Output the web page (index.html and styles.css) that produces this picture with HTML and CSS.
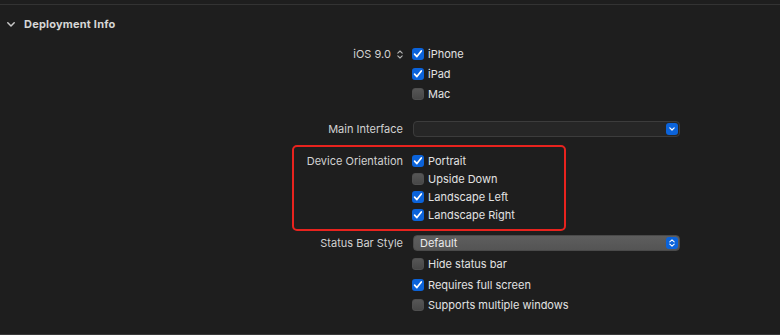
FILE: index.html
```html
<!DOCTYPE html>
<html lang="en">
<head>
  <meta charset="UTF-8">
  <title>Deployment Info</title>
  <link rel="stylesheet" href="styles.css">
</head>
<body>

<!-- 상단 구분선 -->
<div class="rule"></div>

<!-- 섹션 헤더 -->
<div class="section-head">
  <svg class="chevron" width="8" height="5" viewBox="0 0 8 5"><path d="M0.8 0.8 L4 4 L7.2 0.8" fill="none" stroke="#c8c8c8" stroke-width="1.5" stroke-linecap="round" stroke-linejoin="round"/></svg>
  <span class="section-title">Deployment Info</span>
</div>

<div class="form">

  <!-- 대상 OS / 기기 -->
  <div class="field rows-20">
    <div class="label">iOS 9.0
      <svg class="stepper" width="6" height="9" viewBox="0 0 6 9"><path d="M0.8 3.2 L3 1 L5.2 3.2 M0.8 5.8 L3 8 L5.2 5.8" fill="none" stroke="#b4b4b4" stroke-width="1.1" stroke-linecap="round" stroke-linejoin="round"/></svg>
    </div>
    <div class="controls">
      <div class="check on"><span class="box"></span>iPhone</div>
      <div class="check on"><span class="box"></span>iPad</div>
      <div class="check"><span class="box"></span>Mac</div>
    </div>
  </div>

  <!-- Main Interface -->
  <div class="field popup-row main-interface">
    <div class="label">Main Interface</div>
    <div class="popup empty">
      <span class="popup-value"></span>
      <span class="popup-btn">
        <svg width="6" height="4" viewBox="0 0 6 4"><path d="M0.8 0.8 L3 3 L5.2 0.8" fill="none" stroke="#fff" stroke-width="1.2" stroke-linecap="round" stroke-linejoin="round"/></svg>
      </span>
    </div>
  </div>

  <!-- Device Orientation (빨간 박스 강조) -->
  <div class="field rows-18 highlight">
    <div class="label">Device Orientation</div>
    <div class="controls">
      <div class="check on"><span class="box"></span>Portrait</div>
      <div class="check"><span class="box"></span>Upside Down</div>
      <div class="check on"><span class="box"></span>Landscape Left</div>
      <div class="check on"><span class="box"></span>Landscape Right</div>
    </div>
  </div>

  <!-- Status Bar Style -->
  <div class="field popup-row status-bar">
    <div class="label">Status Bar Style</div>
    <div class="popup filled">
      <span class="popup-value">Default</span>
      <span class="popup-btn">
        <svg width="6" height="8" viewBox="0 0 6 8"><path d="M0.8 2.8 L3 0.8 L5.2 2.8 M0.8 5.2 L3 7.2 L5.2 5.2" fill="none" stroke="#fff" stroke-width="1.1" stroke-linecap="round" stroke-linejoin="round"/></svg>
      </span>
    </div>
  </div>

  <div class="field rows-20 status-options">
    <div class="label"></div>
    <div class="controls">
      <div class="check"><span class="box"></span>Hide status bar</div>
      <div class="check on"><span class="box"></span>Requires full screen</div>
      <div class="check"><span class="box"></span>Supports multiple windows</div>
    </div>
  </div>

</div>

<!-- 하단 구분선 -->
<div class="rule bottom"></div>

</body>
</html>
```

FILE: styles.css
```css
/* 기본 */
body {
  margin: 0;
  height: 335px;
  overflow: hidden;
  background: #1e1e1e;
  color: #dcdcdc;
  font-family: "Inter", "Liberation Sans", sans-serif;
  font-size: 11px;
}

.rule {
  height: 1px;
  background: #333333;
  margin-top: 4px;
}
.rule.bottom {
  margin-top: 18px;
  background: #383838;
}

/* 섹션 헤더 */
.section-head {
  display: flex;
  align-items: center;
  height: 14px;
  margin-top: 12px;
  padding-left: 7px;
}
.section-head .chevron {
  margin-right: 9px;
}
.section-title {
  font-weight: 700;
  color: #d6d6d6;
  letter-spacing: 0.2px;
}

/* 폼 */
.form {
  margin-top: 13px;
}
.field {
  display: grid;
  grid-template-columns: 403px 268px;
  column-gap: 9px;
  position: relative;
}
.label {
  text-align: right;
  color: #d2d2d2;
  line-height: 20px;
  white-space: nowrap;
}
.label .stepper {
  margin-left: 3px;
  vertical-align: -1px;
}
.rows-18 .label { line-height: 18px; }

.controls {
  display: flex;
  flex-direction: column;
}
.check {
  display: flex;
  align-items: center;
  height: 20px;
  color: #e2e2e2;
}
.rows-18 .check { height: 18px; }
.status-options .check { height: 20.5px; }

.check .box {
  width: 12px;
  height: 12px;
  box-sizing: border-box;
  border-radius: 3px;
  margin-right: 4px;
  background: linear-gradient(#565656, #474747);
  border: 1px solid #4f4f4f;
}
.check.on .box {
  background: #0b63da url("data:image/svg+xml,%3Csvg xmlns='http://www.w3.org/2000/svg' width='12' height='12' viewBox='0 0 12 12'%3E%3Cpath d='M2.6 6.2 L4.9 8.6 L9.3 2.9' fill='none' stroke='white' stroke-width='1.7' stroke-linecap='round' stroke-linejoin='round'/%3E%3C/svg%3E") center / 12px 12px no-repeat;
  border: none;
}

/* 팝업 버튼 */
.popup-row .label { line-height: 16px; }
.popup {
  display: flex;
  align-items: center;
  justify-content: space-between;
  height: 16px;
  box-sizing: border-box;
  border-radius: 4px;
  padding: 0 1px 0 6px;
  margin-left: 1px;
}
.popup.empty {
  background: #262626;
  border: 1px solid #3c3c3c;
}
.popup.filled {
  background: linear-gradient(#5e5e5e, #545454);
  border: 1px solid #4a4a4a;
  color: #ececec;
  width: 267px;
}
.popup-btn {
  display: flex;
  align-items: center;
  justify-content: center;
  width: 12px;
  height: 12px;
  border-radius: 3px;
  background: #0b63da;
}

.main-interface { margin-top: 17px; }
.highlight { margin-top: 15px; }
.status-bar { margin-top: 11px; }
.status-options { margin-top: 3px; }

/* 빨간 강조 박스 */
.highlight::after {
  content: "";
  position: absolute;
  left: 292px;
  top: -7px;
  width: 274px;
  height: 86px;
  box-sizing: border-box;
  border: 2px solid #e8231e;
  border-radius: 5px;
}
```
